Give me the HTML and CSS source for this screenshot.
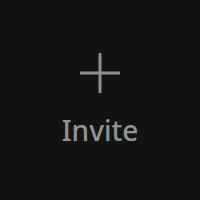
FILE: index.html
```html
<!DOCTYPE html>
<html>
<head>
<meta charset="utf-8">
<link rel="stylesheet" href="styles.css">
</head>
<body>
<div class="invite">
  <svg class="plus" width="40" height="40" viewBox="0 0 40 40">
    <path d="M20 0V40M0 20H40" stroke="#8e8e8e" stroke-width="3" fill="none"/>
  </svg>
  <span class="label">Invite</span>
</div>
</body>
</html>
```
FILE: styles.css
```css
html, body {
  margin: 0;
  width: 200px;
  height: 200px;
  background: #131313;
}
.invite {
  display: flex;
  flex-direction: column;
  align-items: center;
  padding-top: 53px;
}
.plus {
  display: block;
}
.label {
  margin-top: 19px;
  font-family: "Noto Sans", sans-serif;
  font-weight: 500;
  font-size: 28px;
  line-height: 36px;
  color: #939393;
}
```
